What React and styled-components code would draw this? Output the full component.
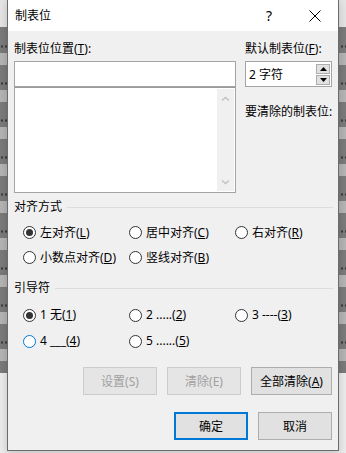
import React from 'react';
import styled, { createGlobalStyle, css } from 'styled-components';

const GlobalStyle = createGlobalStyle`
  html, body {
    margin: 0;
    padding: 0;
  }
  body {
    font-family: "Noto Sans", "Noto Sans CJK SC", sans-serif;
    font-size: 12px;
    color: #000;
  }
`;

const Backdrop = styled.div`
  width: 346px;
  height: 453px;
  overflow: hidden;
  display: flex;
  align-items: flex-start;
  background:
    linear-gradient(#e4e4e4, #e4e4e4) top / 100% 27px no-repeat,
    linear-gradient(#ebebeb, #ebebeb) bottom / 100% 80px no-repeat,
    radial-gradient(circle, #3a3a3a 0.9px, transparent 1.4px) 0 28px / 4px 37px,
    repeating-linear-gradient(to bottom, #7a7a7a 0 25px, #b4b4b4 25px 37px) 0 28px;
`;

const Dialog = styled.div`
  margin-left: 7px;
  width: 330px;
  border: 1px solid #6c6c6c;
  border-top: none;
  box-shadow: 0 2px 8px rgba(0, 0, 0, 0.18);
  display: flex;
  flex-direction: column;
`;

const TitleBar = styled.div`
  height: 31px;
  background: #fff;
  display: flex;
  align-items: center;
  padding-left: 7px;
`;

const Title = styled.span`
  flex: 1;
  font-size: 12px;
  line-height: 16px;
`;

const TitleButton = styled.div`
  width: 46px;
  height: 31px;
  display: flex;
  align-items: center;
  justify-content: center;
  font-size: 14px;
`;

const Body = styled.div`
  background: #f0f0f0;
  padding: 10px 5px 10px 6px;
  display: flex;
  flex-direction: column;
`;

const TopGrid = styled.div`
  display: grid;
  grid-template-columns: 222px 87px;
  column-gap: 9px;
`;

const Column = styled.div`
  display: flex;
  flex-direction: column;
`;

const Label = styled.div`
  line-height: 16px;
  height: 16px;
  white-space: nowrap;
  margin-top: ${p => p.$top || 0}px;
  margin-bottom: ${p => p.$bottom || 0}px;
`;

const TextBox = styled.div`
  height: 26px;
  box-sizing: border-box;
  border: 1px solid #a4a4a4;
  background: #fff;
  display: flex;
  align-items: center;
`;

const ListBox = styled.div`
  height: 106px;
  box-sizing: border-box;
  border: 1px solid #a4a4a4;
  border-top-color: #9a9a9a;
  background: #fff;
  display: flex;
  padding: 1px 1px 1px 0;
`;

const ListArea = styled.div`
  flex: 1;
`;

const ScrollTrack = styled.div`
  width: 17px;
  background: #f0f0f0;
  display: flex;
  flex-direction: column;
  justify-content: space-between;
  align-items: center;
  padding: 7px 0 6px;
`;

const SpinBox = styled(TextBox)`
  padding-left: 3px;
  justify-content: space-between;
  font-size: 12px;
`;

const SpinButtons = styled.div`
  display: flex;
  flex-direction: column;
  gap: 1px;
  margin-right: 1px;
`;

const SpinButton = styled.div`
  width: 14px;
  height: 10px;
  box-sizing: border-box;
  border: 1px solid #adadad;
  background: #e1e1e1;
  display: flex;
  align-items: center;
  justify-content: center;
`;

const GroupHeader = styled.div`
  display: flex;
  align-items: center;
  height: 16px;
  line-height: 16px;
  margin-top: ${p => p.$top}px;
  &::after {
    content: '';
    flex: 1;
    height: 1px;
    background: #dcdcdc;
    margin-left: 5px;
  }
`;

const RadioGrid = styled.div`
  display: grid;
  grid-template-columns: 106px 106px 106px;
  grid-auto-rows: ${p => p.$row}px;
  padding: ${p => p.$pad}px 0 0 9px;
`;

const RadioItem = styled.label`
  display: flex;
  align-items: center;
  gap: 4px;
  white-space: nowrap;
  line-height: 16px;
`;

const RadioCircle = styled.span`
  width: 13px;
  height: 13px;
  box-sizing: border-box;
  border-radius: 50%;
  border: 1px solid ${p => (p.$focus ? '#0078d7' : '#333')};
  background: #fff;
  display: flex;
  align-items: center;
  justify-content: center;
  ${p =>
    p.$checked &&
    css`
      &::after {
        content: '';
        width: 7px;
        height: 7px;
        border-radius: 50%;
        background: #333;
      }
    `}
`;

const ButtonRow = styled.div`
  display: flex;
  justify-content: flex-end;
  gap: 10px;
  padding-right: 1px;
  margin-top: ${p => p.$top}px;
`;

const Button = styled.div`
  width: ${p => p.$w || 74}px;
  height: 28px;
  box-sizing: border-box;
  display: flex;
  align-items: center;
  justify-content: center;
  border: 1px solid #adadad;
  background: #e1e1e1;
  color: #000;
  ${p =>
    p.$disabled &&
    css`
      border-color: #cccccc;
      background: #e5e5e5;
      color: #a0a0a0;
    `}
  ${p =>
    p.$default &&
    css`
      border: 2px solid #0078d7;
    `}
`;

const Chevron = ({ down }) => (
  <svg width="9" height="6" viewBox="0 0 9 6">
    <path
      d={down ? 'M1 1.5 L4.5 4.5 L8 1.5' : 'M1 4.5 L4.5 1.5 L8 4.5'}
      fill="none"
      stroke="#c2c2c2"
      strokeWidth="1.5"
    />
  </svg>
);

const Triangle = ({ down }) => (
  <svg width="7" height="4" viewBox="0 0 7 4">
    <path d={down ? 'M0 0 L7 0 L3.5 4 Z' : 'M0 4 L7 4 L3.5 0 Z'} fill="#000" />
  </svg>
);

const CloseIcon = () => (
  <svg width="12" height="12" viewBox="0 0 12 12">
    <path d="M0.5 0.5 L11.5 11.5 M11.5 0.5 L0.5 11.5" stroke="#000" strokeWidth="1" />
  </svg>
);

const Radio = ({ checked, focus, children }) => (
  <RadioItem>
    <RadioCircle $checked={checked} $focus={focus} />
    <span>{children}</span>
  </RadioItem>
);

export default function App() {
  return (
    <>
      <GlobalStyle />
      <Backdrop>
        <Dialog>
          <TitleBar>
            <Title>制表位</Title>
            <TitleButton>?</TitleButton>
            <TitleButton>
              <CloseIcon />
            </TitleButton>
          </TitleBar>
          <Body>
            <TopGrid>
              <Column>
                <Label $bottom={4}>
                  制表位位置(<u>T</u>):
                </Label>
                <TextBox />
                <ListBox>
                  <ListArea />
                  <ScrollTrack>
                    <Chevron />
                    <Chevron down />
                  </ScrollTrack>
                </ListBox>
              </Column>
              <Column>
                <Label $bottom={4}>
                  默认制表位(<u>F</u>):
                </Label>
                <SpinBox>
                  <span>2 字符</span>
                  <SpinButtons>
                    <SpinButton>
                      <Triangle />
                    </SpinButton>
                    <SpinButton>
                      <Triangle down />
                    </SpinButton>
                  </SpinButtons>
                </SpinBox>
                <Label $top={17}>要清除的制表位:</Label>
              </Column>
            </TopGrid>

            <GroupHeader $top={6}>对齐方式</GroupHeader>
            <RadioGrid $row={25} $pad={5}>
              <Radio checked>
                左对齐(<u>L</u>)
              </Radio>
              <Radio>
                居中对齐(<u>C</u>)
              </Radio>
              <Radio>
                右对齐(<u>R</u>)
              </Radio>
              <Radio>
                小数点对齐(<u>D</u>)
              </Radio>
              <Radio>
                竖线对齐(<u>B</u>)
              </Radio>
            </RadioGrid>

            <GroupHeader $top={10}>引导符</GroupHeader>
            <RadioGrid $row={26} $pad={6}>
              <Radio checked>
                1 无(<u>1</u>)
              </Radio>
              <Radio>
                2 .....(<u>2</u>)
              </Radio>
              <Radio>
                3 ----(<u>3</u>)
              </Radio>
              <Radio focus>
                4 ___(<u>4</u>)
              </Radio>
              <Radio>
                5 ......(<u>5</u>)
              </Radio>
            </RadioGrid>

            <ButtonRow $top={13}>
              <Button $disabled>设置(S)</Button>
              <Button $disabled>清除(E)</Button>
              <Button $w={81}>
                全部清除(<u>A</u>)
              </Button>
            </ButtonRow>
            <ButtonRow $top={17}>
              <Button $default>确定</Button>
              <Button>取消</Button>
            </ButtonRow>
          </Body>
        </Dialog>
      </Backdrop>
    </>
  );
}
